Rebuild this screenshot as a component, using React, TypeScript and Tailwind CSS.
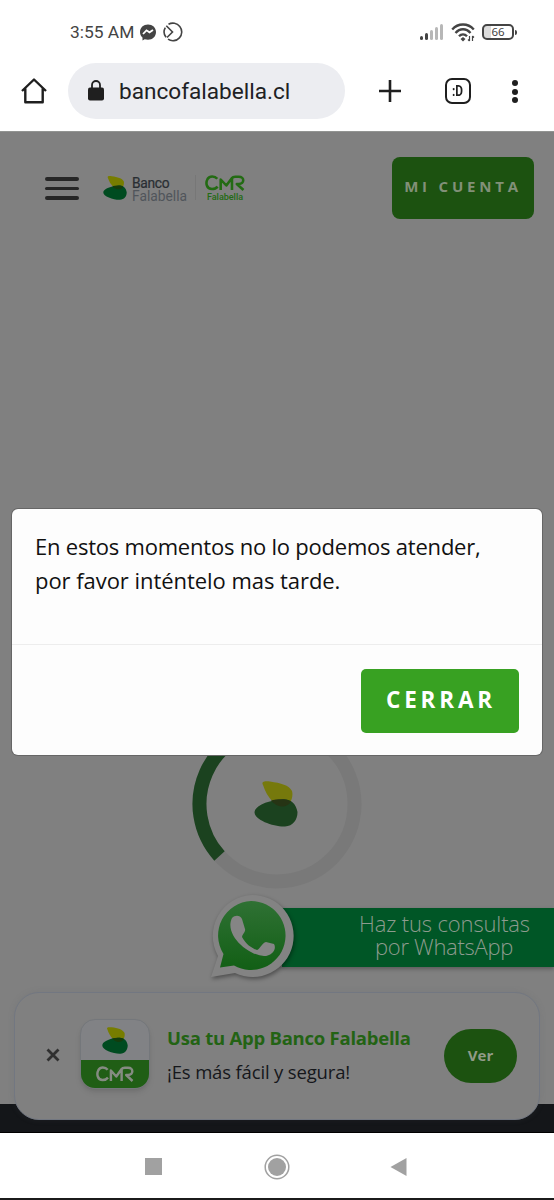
import React from 'react';

function Leaf({ className, mark }: { className: string; mark?: boolean }) {
  return (
    <svg viewBox="0 0 44 46" className={className} preserveAspectRatio="none">
      <path d="M9 4C7 0 11 0 16 .4C27 2 35 4 38 10C39.5 15 37 21 35 23C30 27 23 25 19 21C14 16 11 10 9 4Z" className={mark ? 'fill-[#76790c]' : 'fill-[#777d00]'} />
      <path d="M.5 31C1 26 10 20 27 18.5C36 17 42 22 43.5 31C43.5 39 39 45 31 45.5C20 46 0 39 .5 31Z" className={mark ? 'fill-[#1b421f]' : 'fill-[#004b20]'} />
      <path d="M17 19.6C23 18 32 17.5 37 20.4C35 24 31 26 27 25.5C23 25 20 23 17 19.6Z" className={mark ? 'fill-[#263414]' : 'fill-[#143c0c]'} />
    </svg>
  );
}

function CmrMark({ className }: { className: string }) {
  return (
    <svg viewBox="0 0 39 16" className={className} preserveAspectRatio="none" fill="none" stroke="currentColor" strokeWidth="2.5" strokeLinejoin="round">
      <path d="M12 3.800C9.500 .8 4.500 .6 2.500 4C.3 8 1.500 14 6.800 14C9.300 14 11 13.200 12.300 11.600" />
      <path d="M15.300 15V4.500L20.800 10.500L26.300 3V15" />
      <path d="M26.300 3.200C27 2 28 1.700 29.500 1.700H33C38.700 1.700 38.700 9 33 9H31L37.500 15" />
    </svg>
  );
}

function StatusBar() {
  return (
    <div className="flex h-[62px] items-center pt-[2px] pl-[70px] text-[#444]">
      <span className="w-[65px] text-[17.4px] whitespace-nowrap">3:55 AM</span>
      <svg viewBox="0 0 16 17" className="ml-[5px] h-[17px] w-4">
        <path d="M8 .5C3.500.5 0 3.500 0 8c0 2.400 1 4.200 2.500 5.500v3l2.200-1.200c1 .3 2 .4 3.300.4 4.600 0 8-3.200 8-7.700S12.500.5 8 .5Z" fill="#444" />
        <path d="m3 10 3.500-3.700 3 2L13 6" fill="none" stroke="#fff" strokeWidth="1.800" />
      </svg>
      <svg viewBox="0 0 20 20" className="ml-[7px] size-5" fill="none" stroke="#444" strokeWidth="1.600">
        <path d="M5.500 2.300A8.800 8.800 0 1 1 5 17.200M3 15.300A8.800 8.800 0 0 1 2.300 5.600M3.300 3.800l6.200 6.200L4 15.500" />
      </svg>
      <div className="ml-[237px] flex h-4 w-[26px] items-end gap-[2px]">
        <i className="h-1 w-[3px] rounded-sm bg-[#444]" />
        <i className="h-[7px] w-[3px] rounded-sm bg-[#444]" />
        <i className="h-[10px] w-[3px] rounded-sm bg-[#b7b7b7]" />
        <i className="h-[13px] w-[3px] rounded-sm bg-[#b7b7b7]" />
        <i className="h-4 w-[3px] rounded-sm bg-[#b7b7b7]" />
      </div>
      <svg viewBox="0 0 24 19" className="ml-[5px] h-[19px] w-6" fill="none" stroke="#444" strokeWidth="2.300">
        <path d="M1.200 6.500C7-.2 17-.2 22.800 6.500M4.500 10c4.300-5 10.700-5 15 0M8 13.300c2.300-2.600 5.700-2.600 8 0" />
        <path d="m9.500 16 2.500-2 2.500 2-2.500 2.500Z" fill="#444" stroke="none" />
        <path d="M18.500 13v5M21.500 13v5M17 16.500l1.500 1.500M23 14.500 21.500 13" strokeWidth="1.200" />
      </svg>
      <div className="ml-[7px] flex h-4 w-8 items-center justify-center rounded-[5px] border-2 border-[#444] bg-linear-to-r from-[#ddd] from-25% to-white to-25% font-['Noto_Sans'] text-[11.500px] leading-none">66</div>
      <i className="ml-px h-[5px] w-[2px] rounded-r bg-[#444]" />
    </div>
  );
}

function BrowserBar() {
  return (
    <div className="flex h-[69px] items-start pt-px pl-[21px]">
      <svg viewBox="0 0 26 26" className="mt-[15px] size-[26px]" fill="none" stroke="#1f1f1f" strokeWidth="2.400" strokeLinejoin="round">
        <path d="M1 13 13 1.500 25 13M4.300 10.500V24.300H21.700V10.500" />
      </svg>
      <div className="ml-[21px] flex h-14 w-[277px] items-center rounded-full bg-[#ecedf1] pl-5">
        <svg viewBox="0 0 16 21" className="-mt-[2px] h-[21px] w-4">
          <rect y="7.500" width="16" height="13" rx="2" fill="#1f1f1f" />
          <path d="M4 9V5a4 4 0 0 1 8 0v4" fill="none" stroke="#1f1f1f" strokeWidth="1.800" />
        </svg>
        <span className="mt-[2px] ml-[15px] text-[22.600px] text-[#202124]">bancofalabella.cl</span>
      </div>
      <svg viewBox="0 0 24 24" className="mt-4 ml-[33px] size-6" stroke="#1f1f1f" strokeWidth="2.600">
        <path d="M12 1v22M1 12h22" />
      </svg>
      <div className="mt-[15px] ml-[43px] flex size-[26px] items-center justify-center rounded-[7px] border-[2.500px] border-[#1f1f1f] text-[14px] leading-none font-bold text-[#1f1f1f]">
        <span className="scale-x-85">:D</span>
      </div>
      <div className="mt-[17px] ml-[41px] flex w-[6px] flex-col gap-[2.500px]">
        <i className="size-[6px] rounded-full bg-[#1f1f1f]" />
        <i className="size-[6px] rounded-full bg-[#1f1f1f]" />
        <i className="size-[6px] rounded-full bg-[#1f1f1f]" />
      </div>
    </div>
  );
}

function SiteHeader() {
  return (
    <header className="flex h-[88px] items-start pl-[45px]">
      <div className="mt-[46px] flex w-[34px] flex-col gap-[6px]">
        <i className="h-[3.500px] rounded-full bg-[#262626]" />
        <i className="h-[3.500px] rounded-full bg-[#262626]" />
        <i className="h-[3.500px] rounded-full bg-[#262626]" />
      </div>
      <Leaf className="mt-[45px] ml-6 h-6 w-6" />
      <div className="mt-[46px] ml-[5px] w-[55px] text-[13.800px] leading-[13px] whitespace-nowrap">
        <div className="tracking-[-.300px] text-[#292e33] [-webkit-text-stroke:.2px_#292e33]">Banco</div>
        <div className="text-[#50555b]">Falabella</div>
      </div>
      <div className="mt-[44px] ml-2 h-[25px] w-px bg-[#777]" />
      <div className="mt-[44px] ml-[9px] w-[40px] text-[#236b13]">
        <CmrMark className="h-[16px] w-[40px]" />
        <div className="mt-px text-center text-[9px] leading-[11px] font-medium">Falabella</div>
      </div>
      <button className="mt-[26px] ml-[147px] h-[62px] w-[142px] rounded-lg bg-[#1c5210] pb-[3px] font-['Open_Sans'] text-[15px] font-bold tracking-[3.800px] whitespace-nowrap text-[#829078]">MI CUENTA</button>
    </header>
  );
}

function WhatsAppBanner() {
  return (
    <div className="mt-[2px] flex h-[90px] items-start pl-[210px]">
      <svg viewBox="0 0 86 90" className="relative z-10 -mt-px -ml-px h-[90px] w-[86px] shrink-0 drop-shadow-[1px_2px_2px_rgba(0,0,0,.4)]">
        <defs>
          <linearGradient id="bubble" x2="0" y2="1">
            <stop stopColor="#2f7134" />
            <stop offset="1" stopColor="#125f15" />
          </linearGradient>
        </defs>
        <path d="M43 5A41 41 0 1 1 26 83L2 87L9 66A41 41 0 0 1 43 5Z" fill="#838383" />
        <path d="M42 11A34.500 34.500 0 1 1 25 75.500L11 77.500L14.500 64A34.500 34.500 0 0 1 42 11Z" fill="url(#bubble)" />
        <path d="M23 28C26 25 31 25 33 29L36 39C37 42 33 44 33 47C37 54 42 58 48 60C51 59 53 53 57 52L65 54C68 59 63 66 55 66C38 65 15 44 23 28Z" fill="#858585" />
      </svg>
      <div className="mt-[17px] -ml-[13px] flex h-[59px] flex-1 flex-col items-center bg-[#005626] pt-[7px] pl-[50px] font-['Open_Sans'] text-[22px] leading-[22.500px] font-light tracking-[-.150px] whitespace-nowrap text-[#8d9b8e] shadow-[0_2px_4px_rgba(0,0,0,.3)]">
        <span className="-mt-[3px] ml-[3px]">Haz tus consultas</span>
        <span className="ml-[2px] tracking-[-.300px]">por WhatsApp</span>
      </div>
    </div>
  );
}

function AppCard() {
  return (
    <div className="relative mx-[14px] mt-[8px] flex h-[128px] items-start rounded-[25px] border border-[#727781] bg-[#808080] shadow-[0_0_6px_rgba(80,85,95,.15)]">
      <svg viewBox="0 0 14 14" className="mt-[55px] ml-[31px] size-[14px]" stroke="#303030" strokeWidth="2.800">
        <path d="m1.500 1.500 11 11m0-11-11 11" />
      </svg>
      <div className="mt-[26px] ml-[20px] flex h-[70px] w-[70px] flex-col items-center overflow-hidden rounded-[15px] border border-[#74777b] bg-[#818285] shadow-md">
        <Leaf className="mt-[7px] h-[27px] w-[26px] shrink-0" />
        <div className="mt-[6px] flex h-[30px] w-full shrink-0 justify-center bg-[#205e15] pt-[6px] text-[#858b82]">
          <CmrMark className="h-[16px] w-[38px]" />
        </div>
      </div>
      <div className="mt-[31px] ml-[17px] w-[250px] whitespace-nowrap">
        <div className="font-['Open_Sans'] text-[18.500px] leading-7 font-bold tracking-[-.240px] text-[#236314]">Usa tu App Banco Falabella</div>
        <div className="mt-[6px] font-['Open_Sans'] text-[18.500px] leading-7 tracking-[-.160px] text-[#15171b]">¡Es más fácil y segura!</div>
      </div>
      <button className="mt-[36px] ml-[27px] h-[54px] w-[73px] rounded-full bg-[#1c5210] pb-[2px] font-['Open_Sans'] text-[15px] font-bold text-[#919b88]">Ver</button>
    </div>
  );
}

function ErrorDialog() {
  return (
    <section role="dialog" className="absolute top-[378px] right-[12px] left-[12px] flex h-[246px] flex-col rounded-[6px] bg-[#fdfdfd] shadow-[0_0_0_1px_#666]">
      <p className="h-[136px] border-b border-[#ededed] pt-[20px] pl-[23px] font-['Open_Sans'] text-[22px] leading-[34px] whitespace-nowrap text-[#111]">
        <span className="tracking-[-.220px]">En estos momentos no lo podemos atender,</span>
        <br />
        <span className="tracking-[-.050px]">por favor inténtelo mas tarde.</span>
      </p>
      <button className="mt-6 mr-[23px] h-16 w-[158px] self-end rounded-[5px] bg-[#38a122] pb-[2px] pl-[2px] font-['Open_Sans'] text-[22.500px] font-bold tracking-[3.800px] text-white">CERRAR</button>
    </section>
  );
}

export default function App() {
  return (
    <div className="flex h-[1200px] w-[554px] flex-col overflow-hidden bg-white font-[Roboto,sans-serif]">
      <StatusBar />
      <BrowserBar />
      <main className="relative flex h-[1002px] flex-col bg-[#808080] shadow-[inset_0_1px_0_#929492]">
        <SiteHeader />
        <div className="mt-[500px] flex h-[170px] justify-center">
          <div className="grid size-[170px] place-items-center">
            <svg viewBox="0 0 170 170" className="col-start-1 row-start-1 size-[170px]" fill="none" strokeWidth="14">
              <circle cx="85" cy="85" r="77.500" stroke="#797979" />
              <path d="M27.500 137A77.500 77.500 0 0 1 85 7.500" stroke="#1b421f" />
            </svg>
            <Leaf mark className="col-start-1 row-start-1 mr-[2px] h-[46px] w-[44px]" />
          </div>
        </div>
        <WhatsAppBanner />
        <div className="h-[3px]" />
        <div className="relative h-[149px]">
          <div className="absolute inset-x-0 top-[120px] h-[29px] border-b border-black bg-[#141619]" />
          <AppCard />
        </div>
        <ErrorDialog />
      </main>
      <nav className="flex h-[65px] shrink-0 items-center pt-[2px] pl-[145px]">
        <i className="size-[17px] bg-[#a1a1a1]" />
        <svg viewBox="0 0 26 26" className="ml-[102px] size-[26px]">
          <circle cx="13" cy="13" r="11.800" fill="none" stroke="#a1a1a1" strokeWidth="1.500" />
          <circle cx="13" cy="13" r="9" fill="#a1a1a1" />
        </svg>
        <svg viewBox="0 0 17 20" className="ml-[100px] h-5 w-[17px]">
          <path d="M16.500 1v18L.5 10Z" fill="#a1a1a1" />
        </svg>
      </nav>
      <div className="h-[2px] shrink-0 bg-[#1b1b1b]" />
    </div>
  );
}
